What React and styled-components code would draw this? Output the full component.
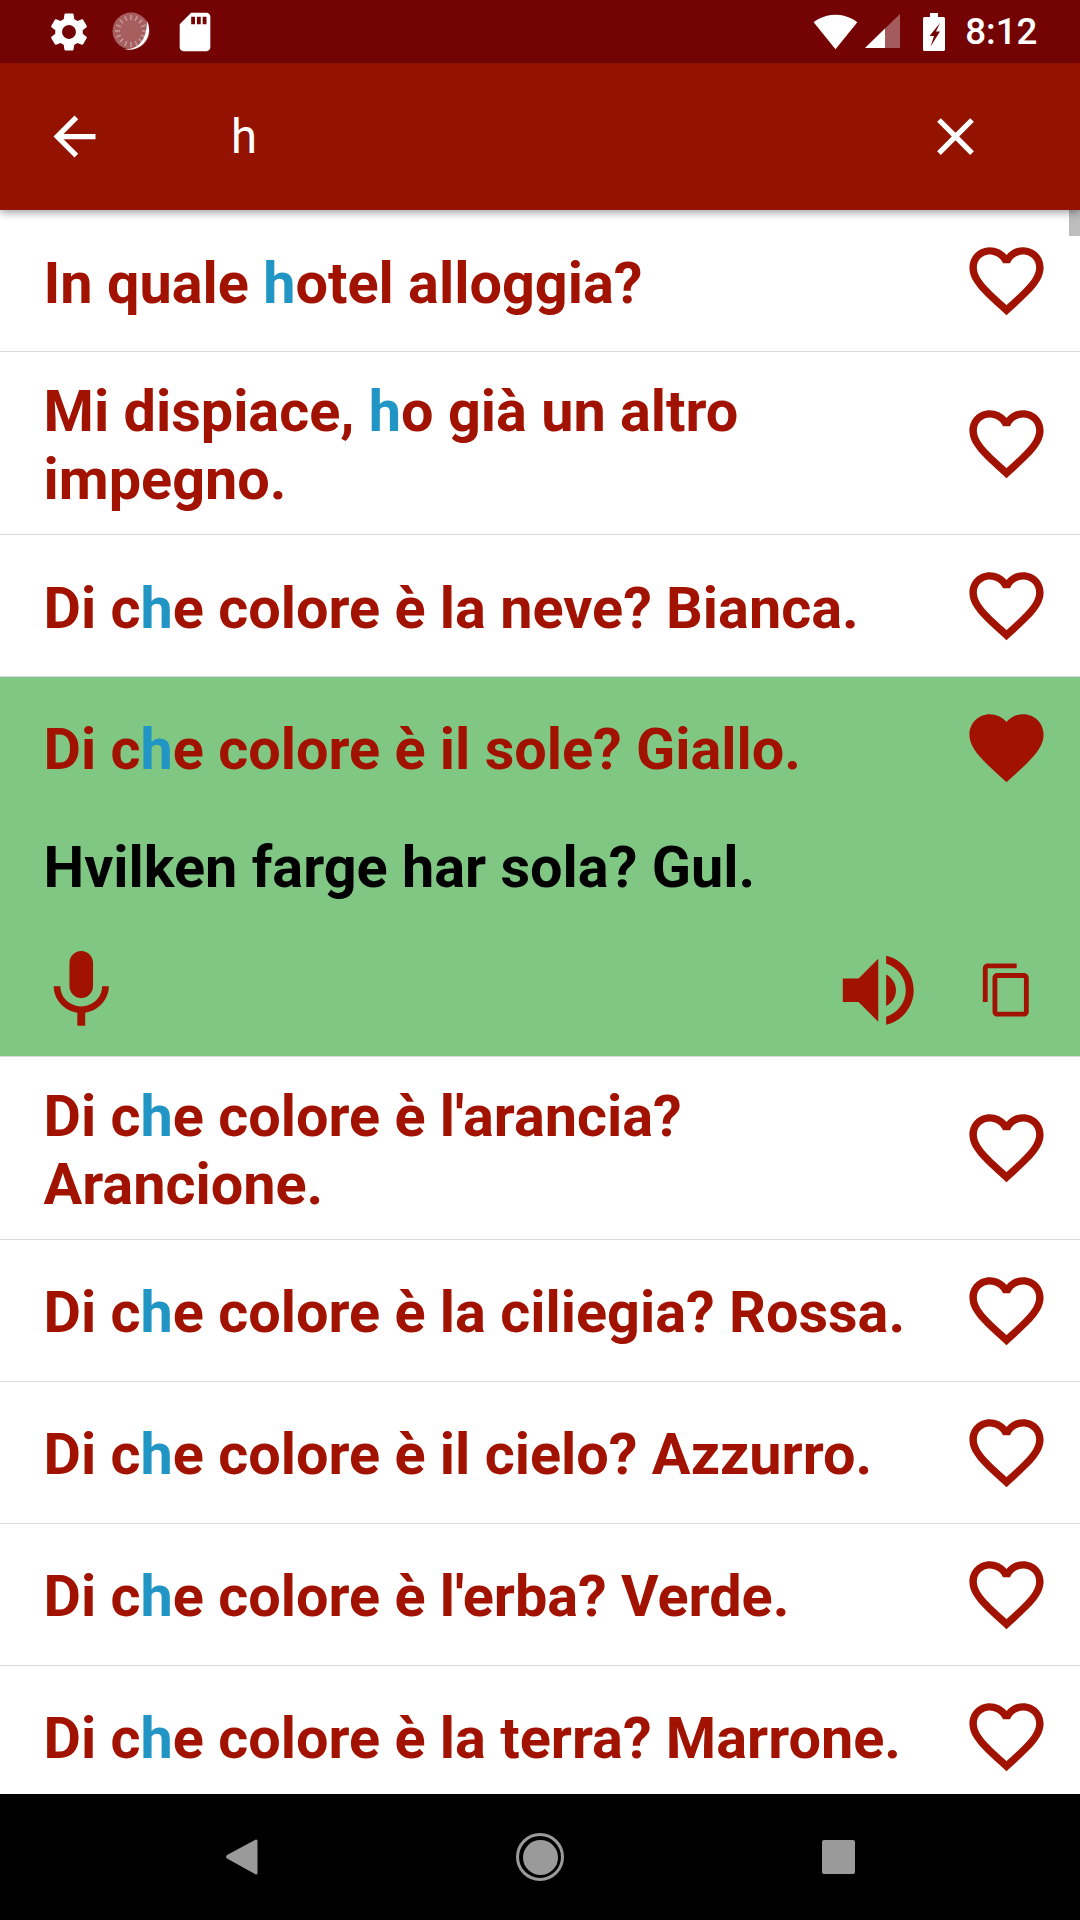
import React from 'react'
import styled, { createGlobalStyle } from 'styled-components'

const RED = '#a11200'

const GlobalStyle = createGlobalStyle`
  html, body {
    margin: 0;
    padding: 0;
    background: #fff;
    font-family: Roboto, "Liberation Sans", sans-serif;
  }
`

const PHRASES = [
  { text: 'In quale hotel alloggia?' },
  { text: 'Mi dispiace, ho già un altro impegno.' },
  { text: 'Di che colore è la neve? Bianca.' },
  { text: 'Di che colore è il sole? Giallo.', translation: 'Hvilken farge har sola? Gul.' },
  { text: "Di che colore è l'arancia? Arancione." },
  { text: 'Di che colore è la ciliegia? Rossa.' },
  { text: 'Di che colore è il cielo? Azzurro.' },
  { text: "Di che colore è l'erba? Verde." },
  { text: 'Di che colore è la terra? Marrone.' },
]

const PATHS = {
  gear: 'M19.14 12.94c.04-.3.06-.61.06-.94 0-.32-.02-.64-.07-.94l2.03-1.58c.18-.14.23-.41.12-.61l-1.92-3.32c-.12-.22-.37-.29-.59-.22l-2.39.96c-.5-.38-1.03-.7-1.62-.94l-.36-2.54c-.04-.24-.24-.41-.48-.41h-3.84c-.24 0-.43.17-.47.41l-.36 2.54c-.59.24-1.13.57-1.62.94l-2.39-.96c-.22-.08-.47 0-.59.22L2.74 8.87c-.12.21-.08.47.12.61l2.03 1.58c-.05.3-.09.63-.09.94s.02.64.07.94l-2.03 1.58c-.18.14-.23.41-.12.61l1.92 3.32c.12.22.37.29.59.22l2.39-.96c.5.38 1.03.7 1.62.94l.36 2.54c.05.24.24.41.48.41h3.84c.24 0 .44-.17.47-.41l.36-2.54c.59-.24 1.13-.56 1.62-.94l2.39.96c.22.08.47 0 .59-.22l1.92-3.32c.12-.22.07-.47-.12-.61l-2.01-1.58zM12 15.6c-1.98 0-3.6-1.62-3.6-3.6s1.62-3.6 3.6-3.6 3.6 1.62 3.6 3.6-1.62 3.6-3.6 3.6z',
  sd: 'M18 2h-8L4.02 8 4 20c0 1.1.9 2 2 2h12c1.1 0 2-.9 2-2V4c0-1.1-.9-2-2-2zm-6 6h-2V4h2v4zm3 0h-2V4h2v4zm3 0h-2V4h2v4z',
  wifi: 'M12.01 21.49L23.64 7c-.45-.34-4.93-4-11.64-4C5.28 3 .81 6.66.36 7l11.63 14.49.01.01.01-.01z',
  back: 'M20 11H7.83l5.59-5.59L12 4l-8 8 8 8 1.41-1.41L7.83 13H20v-2z',
  close: 'M19 6.41L17.59 5 12 10.59 6.41 5 5 6.41 10.59 12 5 17.59 6.41 19 12 13.41 17.59 19 19 17.59 13.41 12z',
  heart: 'M16.5 3c-1.74 0-3.41.81-4.5 2.09C10.91 3.81 9.24 3 7.5 3 4.42 3 2 5.42 2 8.5c0 3.78 3.4 6.86 8.55 11.54L12 21.35l1.45-1.32C18.6 15.36 22 12.28 22 8.5 22 5.42 19.58 3 16.5 3zm-4.4 15.55l-.1.1-.1-.1C7.14 14.24 4 11.39 4 8.5 4 6.5 5.5 5 7.5 5c1.54 0 3.04.99 3.57 2.36h1.87C13.46 5.99 14.96 5 16.5 5c2 0 3.5 1.5 3.5 3.5 0 2.89-3.14 5.74-7.9 10.05z',
  heartFull: 'M12 21.35l-1.45-1.32C5.4 15.36 2 12.28 2 8.5 2 5.42 4.42 3 7.5 3c1.74 0 3.41.81 4.5 2.09C13.09 3.81 14.76 3 16.5 3 19.58 3 22 5.42 22 8.5c0 3.78-3.4 6.86-8.55 11.54L12 21.35z',
  mic: 'M12 14c1.66 0 2.99-1.34 2.99-3L15 5c0-1.66-1.34-3-3-3S9 3.34 9 5v6c0 1.66 1.34 3 3 3zm5.3-3c0 3-2.54 5.1-5.3 5.1S6.7 14 6.7 11H5c0 3.41 2.72 6.23 6 6.72V21h2v-3.28c3.28-.48 6-3.3 6-6.72h-1.7z',
  speaker: 'M3 9v6h4l5 5V4L7 9H3zm13.5 3c0-1.77-1.02-3.29-2.5-4.03v8.05c1.48-.73 2.5-2.25 2.5-4.02zM14 3.23v2.06c2.89.86 5 3.54 5 6.71s-2.11 5.85-5 6.71v2.06c4.01-.91 7-4.49 7-8.77s-2.99-7.86-7-8.77z',
  copy: 'M16 1H4c-1.1 0-2 .9-2 2v14h2V3h12V1zm3 4H8c-1.1 0-2 .9-2 2v14c0 1.1.9 2 2 2h11c1.1 0 2-.9 2-2V7c0-1.1-.9-2-2-2zm0 16H8V7h11v14z',
}

const Screen = styled.div`
  width: 1080px;
  height: 1920px;
  display: flex;
  flex-direction: column;
  overflow: hidden;
`

const StatusBar = styled.div`
  height: 63px;
  flex: none;
  display: flex;
  align-items: center;
  justify-content: space-between;
  background: #740404;
  padding: 0 42.5px 0 37px;
  box-sizing: border-box;
`

const StatusGroup = styled.div`
  display: flex;
  align-items: center;
`

const StatusSlot = styled.div`
  width: 63px;
  display: flex;
  justify-content: center;
`

const Glyph = styled.svg`
  display: block;
  flex: none;
  width: ${(p) => p.$size}px;
  height: ${(p) => p.$size}px;
  fill: ${(p) => p.$color || RED};
`

const WifiSlot = styled.div`
  margin-right: 7.5px;
`

const SignalSlot = styled.div`
  margin-right: 23px;
`

const BatterySlot = styled.div`
  margin-right: 20px;
`

const Clock = styled.span`
  color: #fff;
  font-size: 36.75px;
  font-weight: 500;
  line-height: 63px;
`

const Toolbar = styled.header`
  height: 147px;
  flex: none;
  display: flex;
  align-items: center;
  background: #931200;
  padding: 0 93.5px 0 42.5px;
  box-sizing: border-box;
  box-shadow: 0 3px 8px rgba(0, 0, 0, 0.35);
  position: relative;
  z-index: 2;
`

const Query = styled.div`
  flex: 1;
  color: #fff;
  font-size: 47.25px;
  padding-left: 125.5px;
`

const List = styled.div`
  flex: 1;
  min-height: 0;
  overflow: hidden;
  position: relative;
`

const ScrollThumb = styled.div`
  position: absolute;
  top: 0;
  right: 0;
  width: 11px;
  height: 26px;
  background: #bdbdbd;
`

const Item = styled.div`
  border-bottom: 1px solid #dcdcdc;
  background: ${(p) => (p.$open ? '#81c784' : '#fff')};
`

const Row = styled.div`
  display: flex;
  align-items: center;
  min-height: ${(p) => (p.$open ? 140 : 141)}px;
  padding: 0 29px 0 43.5px;
`

const Phrase = styled.div`
  flex: 1;
  min-width: 0;
  padding: 26px 0 20px;
  color: ${RED};
  font-size: 57.6px;
  font-weight: 700;
  line-height: 68px;
`

const Match = styled.span`
  color: #2196c4;
`

const Translation = styled.div`
  padding: 17px 43.5px 0;
  color: #000;
  font-size: 57.6px;
  font-weight: 700;
  line-height: 68px;
`

const Actions = styled.div`
  display: flex;
  align-items: center;
  padding: 41px 44px 18px 34px;
`

const Spacer = styled.div`
  flex: 1;
`

const CopyIcon = styled(Glyph)`
  margin-left: 53px;
`

const NavBar = styled.nav`
  height: 126px;
  flex: none;
  background: #000;
  display: flex;
  align-items: center;
  justify-content: center;
  gap: 250px;
`

const NavSlot = styled.div`
  width: 48px;
  display: flex;
  justify-content: center;
`

const BackTriangle = styled.svg`
  display: block;
  width: 32px;
  height: 36px;
  fill: #9a9a9a;
`

const HomeRing = styled.div`
  width: 48px;
  height: 48px;
  box-sizing: border-box;
  border: 3px solid #9a9a9a;
  border-radius: 50%;
  display: flex;
  align-items: center;
  justify-content: center;
`

const HomeDot = styled.div`
  width: 35px;
  height: 35px;
  border-radius: 50%;
  background: #9a9a9a;
`

const RecentSquare = styled.div`
  width: 33px;
  height: 34px;
  border-radius: 2px;
  background: #9a9a9a;
`

const Icon = ({ name, size, color, as: As = Glyph, ...rest }) => (
  <As $size={size} $color={color} viewBox="0 0 24 24" {...rest}>
    <path d={PATHS[name]} />
  </As>
)

function SyncDial() {
  const ticks = Array.from({ length: 16 }, (_, i) => (i * 360) / 16)
  return (
    <Glyph $size={40} $color="#fff" viewBox="0 0 40 40">
      <circle cx="19" cy="19" r="18.5" opacity="0.36" />
      {ticks.map((deg) => (
        <rect key={deg} x="18.3" y="3" width="1.4" height="5" opacity="0.4" transform={`rotate(${deg} 19 19)`} />
      ))}
      <path d="M35 9c4 8 2 17-4 23-5 5-13 7-20 5 8 1 15-2 19-8 4-6 5-14 5-20z" />
    </Glyph>
  )
}

function SignalBars() {
  return (
    <Glyph $size={35} $color="#fff" viewBox="0 0 35 35">
      <path d="M0 34H35V0z" opacity="0.35" />
      <path d="M0 34H20V14.6z" />
    </Glyph>
  )
}

const BatteryGlyph = styled.svg`
  display: block;
  width: 22px;
  height: 38px;
  fill: #fff;
`

function Battery() {
  return (
    <BatteryGlyph viewBox="0 0 22 38">
      <path
        fillRule="evenodd"
        d="M7 0h8v4h5.5c.8 0 1.5.7 1.5 1.5v31c0 .8-.7 1.5-1.5 1.5h-19C.7 38 0 37.3 0 36.5v-31C0 4.7.7 4 1.5 4H7zM17 10L6.5 23H11L7.6 33.5 17 18.5H13z"
      />
    </BatteryGlyph>
  )
}

function Highlighted({ text }) {
  const at = text.indexOf('h')
  return (
    <>
      {text.slice(0, at)}
      <Match>h</Match>
      {text.slice(at + 1)}
    </>
  )
}

function PhraseItem({ text, translation }) {
  const open = Boolean(translation)
  return (
    <Item $open={open}>
      <Row $open={open}>
        <Phrase>
          <Highlighted text={text} />
        </Phrase>
        <Icon name={open ? 'heartFull' : 'heart'} size={89} />
      </Row>
      {open && (
        <>
          <Translation>{translation}</Translation>
          <Actions>
            <Icon name="mic" size={94.5} />
            <Spacer />
            <Icon name="speaker" size={94.5} />
            <Icon name="copy" size={58} as={CopyIcon} />
          </Actions>
        </>
      )}
    </Item>
  )
}

export default function App() {
  return (
    <Screen>
      <GlobalStyle />
      <StatusBar>
        <StatusGroup>
          <StatusSlot>
            <Icon name="gear" size={46} color="#fff" />
          </StatusSlot>
          <StatusSlot>
            <SyncDial />
          </StatusSlot>
          <StatusSlot>
            <Icon name="sd" size={46} color="#fff" />
          </StatusSlot>
        </StatusGroup>
        <StatusGroup>
          <WifiSlot>
            <Icon name="wifi" size={45} color="#fff" />
          </WifiSlot>
          <SignalSlot>
            <SignalBars />
          </SignalSlot>
          <BatterySlot>
            <Battery />
          </BatterySlot>
          <Clock>8:12</Clock>
        </StatusGroup>
      </StatusBar>
      <Toolbar>
        <Icon name="back" size={63} color="#fff" />
        <Query>h</Query>
        <Icon name="close" size={63} color="#fff" />
      </Toolbar>
      <List>
        {PHRASES.map((phrase) => (
          <PhraseItem key={phrase.text} {...phrase} />
        ))}
        <ScrollThumb />
      </List>
      <NavBar>
        <NavSlot>
          <BackTriangle viewBox="0 0 32 36">
            <path d="M30 0.5c1 0 1.5.8 1.5 1.8v31.4c0 1-.5 1.8-1.5 1.8-.5 0-1-.3-1.5-.7L1 19.5c-1.2-1-1.2-2.4 0-3.4L28.5 1.2c.5-.4 1-.7 1.5-.7z" />
          </BackTriangle>
        </NavSlot>
        <NavSlot>
          <HomeRing>
            <HomeDot />
          </HomeRing>
        </NavSlot>
        <NavSlot>
          <RecentSquare />
        </NavSlot>
      </NavBar>
    </Screen>
  )
}
